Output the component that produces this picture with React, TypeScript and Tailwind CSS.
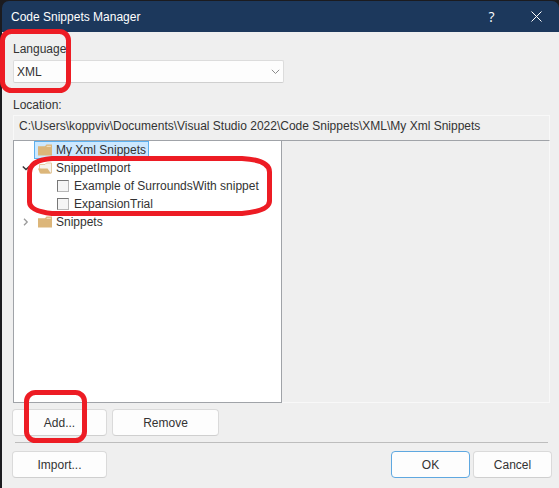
import { useState } from "react";
import type { ButtonHTMLAttributes, ReactNode } from "react";

function PushButton({
  primary = false,
  className = "",
  ...rest
}: ButtonHTMLAttributes<HTMLButtonElement> & { primary?: boolean }) {
  const edge = primary
    ? "border-[#5fa8e0]"
    : "border-[#dadada] border-b-[#cfcfcf]";
  return (
    <button
      type="button"
      className={`h-[27px] rounded-[4px] border bg-[#fdfdfd] text-center ${edge} ${className}`}
      {...rest}
    />
  );
}

function ClosedFolder() {
  return (
    <svg width="14" height="12" viewBox="0 0 14 12" aria-hidden="true">
      <path d="M0 2.300H7L8.500.6H14V11.500H0z" fill="#dcb67a" />
      <path d="M8.600 2.300h4.200" stroke="#f4e6cb" strokeWidth="1" />
    </svg>
  );
}

function OpenFolder() {
  return (
    <svg width="14" height="12" viewBox="0 0 14 12" aria-hidden="true">
      <path d="M1.500 6V2.500H7L8.500 1H13.500V11H3z" fill="#f6f2ee" stroke="#e3cba3" />
      <path d="M0 6.500h9.500l3.500 5H2z" fill="#dcb67a" />
    </svg>
  );
}

function Chevron({ open }: { open: boolean }) {
  return (
    <svg width="8" height="8" viewBox="0 0 8 8" fill="none" aria-hidden="true">
      {open ? (
        <path d="M.8 2.400 4 5.600l3.200-3.200" stroke="#333" strokeWidth="1.400" />
      ) : (
        <path d="m2 .8 3.200 3.200L2 7.200" stroke="#9a9a9a" strokeWidth="1.300" />
      )}
    </svg>
  );
}

function FolderRow({
  name,
  icon,
  expander,
  selected = false,
}: {
  name: string;
  icon: ReactNode;
  expander?: ReactNode;
  selected?: boolean;
}) {
  return (
    <div className="flex h-[18px] items-center">
      <span className="flex w-[20px] shrink-0 justify-center pl-1">{expander}</span>
      <span
        className={`flex h-[18px] items-center gap-[4px] border pr-[2px] pl-[3px] ${
          selected ? "border-[#5db0ee] bg-[#cce8ff]" : "border-transparent"
        }`}
      >
        {icon}
        {name}
      </span>
    </div>
  );
}

function SnippetRow({ name }: { name: string }) {
  return (
    <label className="flex h-[18px] items-center gap-[5px] pl-[43px]">
      <input
        type="checkbox"
        className="size-[12px] shrink-0 appearance-none border border-[#b8b8b8] border-t-[#777] border-l-[#777] bg-[#f5f5f5] checked:bg-[#5fa8e0]"
      />
      {name}
    </label>
  );
}

function Highlights() {
  return (
    <svg
      className="pointer-events-none absolute top-0 left-0"
      width="280"
      height="450"
      viewBox="0 0 280 450"
      fill="none"
      stroke="#ed1c24"
      strokeWidth="5"
      aria-hidden="true"
    >
      <rect x="2.500" y="31.500" width="66" height="59" rx="9" />
      <path d="M52 158.500H242Q269.500 160 269.500 172V201Q269.500 211 242 213.500H52Q29.500 211 29.500 202V173Q29.500 160 52 158.500Z" />
      <rect x="26.500" y="392.500" width="58" height="48" rx="9" />
    </svg>
  );
}

export default function App() {
  const [language, setLanguage] = useState("XML");
  return (
    <div className="relative flex min-h-screen flex-col bg-[#1b1b1f] pt-px pl-[2px] font-['Liberation_Sans',Arial,sans-serif] text-[12px] leading-[16px] text-[#333]">
      <header className="flex h-[31px] items-center rounded-t-[7px] bg-[#1c385c] pl-[9px] text-white">
        <h1 className="grow">Code Snippets Manager</h1>
        <button
          type="button"
          aria-label="Help"
          className="h-full w-[45px] font-['Open_Sans',sans-serif] text-[14px]"
        >
          ?
        </button>
        <button
          type="button"
          aria-label="Close"
          className="flex h-full w-[45px] items-center justify-center"
        >
          <svg width="11" height="11" viewBox="0 0 11 11" stroke="currentColor">
            <path d="m.5.5 10 10m0-10-10 10" />
          </svg>
        </button>
      </header>

      <main className="flex grow flex-col bg-[#efefef] pt-[9px] pr-[9px] pl-[11px]">
        <label htmlFor="language">Language:</label>
        <div className="relative mt-[3px] w-[50.5%]">
          <select
            id="language"
            value={language}
            onChange={(e) => setLanguage(e.target.value)}
            className="h-[23px] w-full appearance-none rounded-[2px] border border-[#dcdcdc] border-b-[#cfcfcf] bg-[#fdfdfd] pl-[3px]"
          >
            <option>XML</option>
          </select>
          <svg
            className="pointer-events-none absolute top-[9px] right-[4px]"
            width="9"
            height="6"
            viewBox="0 0 9 6"
            fill="none"
            stroke="#8a8a8a"
            aria-hidden="true"
          >
            <path d="m.8.8 3.700 3.700L8.200.8" />
          </svg>
        </div>

        <label htmlFor="location" className="mt-[14px]">
          Location:
        </label>
        <input
          id="location"
          readOnly
          value="C:\Users\koppviv\Documents\Visual Studio 2022\Code Snippets\XML\My Xml Snippets"
          className="mt-[2px] h-[25px] border border-b-0 border-[#f8f8f8] bg-[#efefef] pb-[4px] pl-[5px]"
        />

        <div className="flex h-[263px]">
          <section
            aria-label="Snippet folders"
            className="w-1/2 border border-[#a0a3a8] bg-white"
          >
            <FolderRow name="My Xml Snippets" icon={<ClosedFolder />} selected />
            <FolderRow
              name="SnippetImport"
              icon={<OpenFolder />}
              expander={<Chevron open />}
            />
            <SnippetRow name="Example of SurroundsWith snippet" />
            <SnippetRow name="ExpansionTrial" />
            <FolderRow
              name="Snippets"
              icon={<ClosedFolder />}
              expander={<Chevron open={false} />}
            />
          </section>
          <section
            aria-label="Details"
            className="grow border border-l-0 border-[#f8f8f8] border-t-[#a0a3a8]"
          />
        </div>

        <div className="mt-[6px] -ml-px flex gap-[5px]">
          <PushButton className="w-[95px]">Add...</PushButton>
          <PushButton className="w-[107px]">Remove</PushButton>
        </div>
        <hr className="mx-[2px] mt-[6px] border-[#bdbdbd]" />
        <div className="mt-[8px] -mr-[2px] -ml-px flex gap-[3px]">
          <PushButton className="mr-auto w-[95px]">Import...</PushButton>
          <PushButton primary className="w-[79px]">
            OK
          </PushButton>
          <PushButton className="w-[79px]">Cancel</PushButton>
        </div>
      </main>
      <Highlights />
    </div>
  );
}
